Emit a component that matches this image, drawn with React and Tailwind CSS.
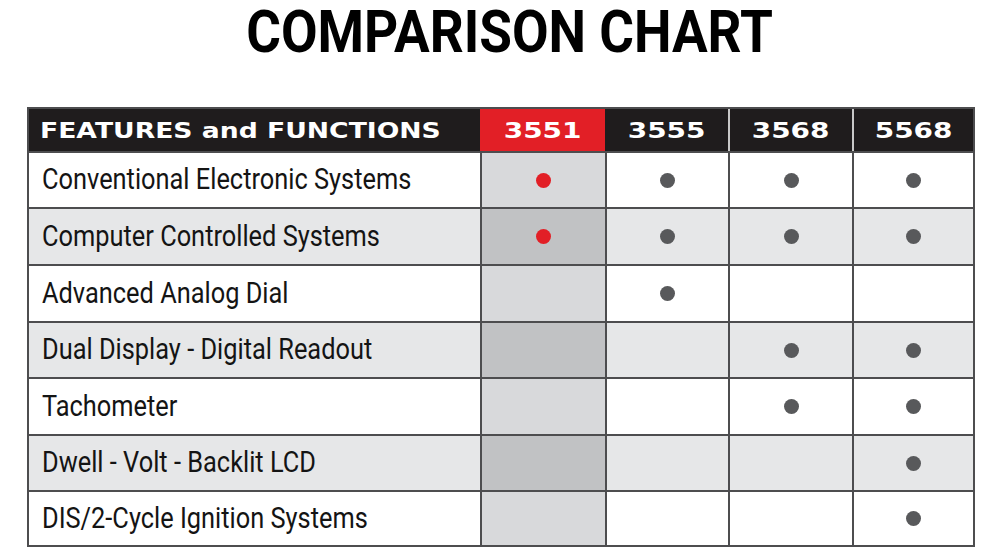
import React from "react";

const rows = [
  { label: "Conventional Electronic Systems", v: [1, 1, 1, 1], h: "h-[56px]" },
  { label: "Computer Controlled Systems", v: [1, 1, 1, 1], h: "h-[57px]" },
  { label: "Advanced Analog Dial", v: [0, 1, 0, 0], h: "h-[57px]" },
  { label: "Dual Display - Digital Readout", v: [0, 0, 1, 1], h: "h-[56px]" },
  { label: "Tachometer", v: [0, 0, 1, 1], h: "h-[57px]" },
  { label: "Dwell - Volt - Backlit LCD", v: [0, 0, 0, 1], h: "h-[56px]" },
  { label: "DIS/2-Cycle Ignition Systems", v: [0, 0, 0, 1], h: "h-[55px]" },
];

const widths = ["w-[125px]", "w-[123px]", "w-[124px]", "flex-1"];

function Dot({ red }) {
  return (
    <span
      className={
        "block w-[15px] h-[15px] rounded-full " +
        (red ? "bg-[#e21f26]" : "bg-[#58595b]")
      }
    />
  );
}

export default function App() {
  return (
    <div className="w-[1000px] h-[560px] bg-white overflow-hidden">
      <div className="flex justify-center pl-[20px] h-[64px]">
        <span
          className="inline-block text-[59px] leading-[64px] font-bold text-black scale-x-[0.9] origin-center whitespace-nowrap"
          style={{ fontFamily: "Roboto, sans-serif" }}
        >
          COMPARISON CHART
        </span>
      </div>
      <div className="mt-[43px] ml-[27px] w-[948px] border-2 border-[#4d4d4f]">
        <div className="flex h-[42px] bg-[#1f1c1d] text-white">
          <div className="w-[451px] flex items-center pl-[11px]">
            <span
              className="inline-block text-[22px] font-bold scale-x-[1.21] origin-left whitespace-nowrap"
              style={{ fontFamily: "'DejaVu Sans', sans-serif" }}
            >
              FEATURES and FUNCTIONS
            </span>
          </div>
          {["3551", "3555", "3568", "5568"].map((n, i) => (
            <div
              key={n}
              className={
                widths[i] +
                " flex items-center justify-center " +
                (i === 0 ? "bg-[#e21f26] " : "") +
                (i >= 2 ? "border-l-2 border-[#c8c8c8]" : "")
              }
            >
              <span
                className="inline-block text-[22px] font-bold scale-x-[1.27] whitespace-nowrap"
                style={{ fontFamily: "'DejaVu Sans', sans-serif" }}
              >
                {n}
              </span>
            </div>
          ))}
        </div>
        {rows.map((r, ri) => {
          const even = ri % 2 === 1;
          return (
            <div
              key={r.label}
              className={
                "flex border-t-2 border-[#4d4d4f] " +
                r.h +
                (even ? " bg-[#e6e7e8]" : " bg-white")
              }
            >
              <div className="w-[451px] flex items-center pl-[13px]">
                <span
                  className="inline-block text-[29px] text-[#141414] scale-x-[0.875] origin-left whitespace-nowrap"
                  style={{ fontFamily: "Roboto, sans-serif" }}
                >
                  {r.label}
                </span>
              </div>
              {r.v.map((on, ci) => (
                <div
                  key={ci}
                  className={
                    widths[ci] +
                    " border-l-2 border-[#4d4d4f] flex items-center justify-center " +
                    (ci === 0 ? (even ? "bg-[#c1c2c4]" : "bg-[#d8d9db]") : "")
                  }
                >
                  {on ? <Dot red={ci === 0} /> : null}
                </div>
              ))}
            </div>
          );
        })}
      </div>
    </div>
  );
}
